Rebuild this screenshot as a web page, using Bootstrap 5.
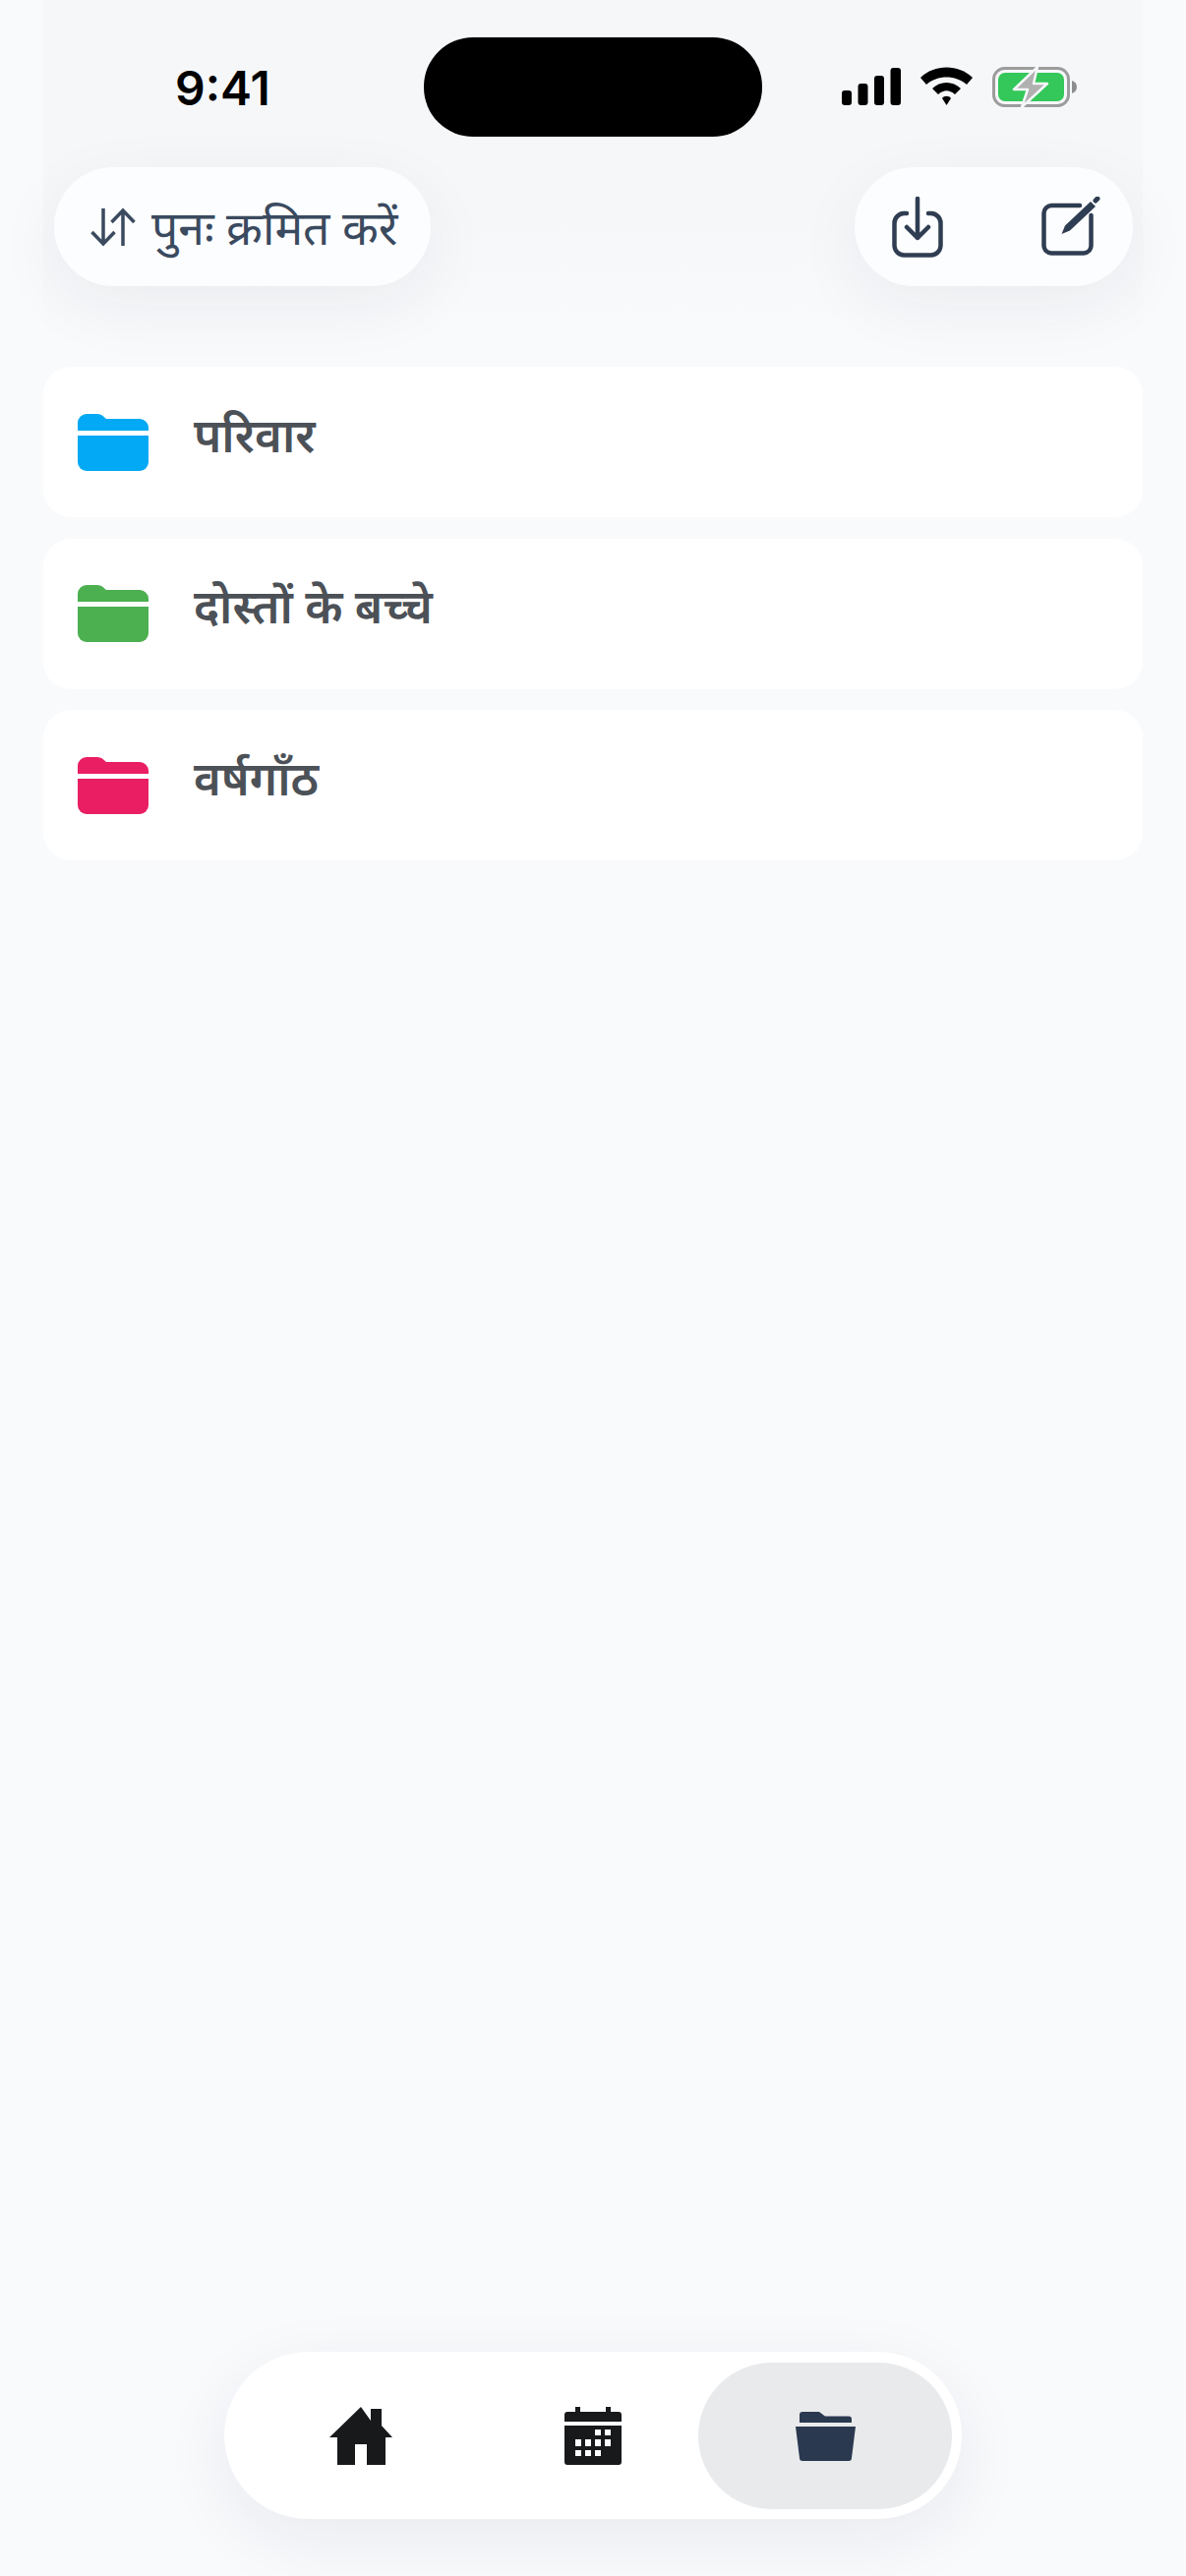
<!DOCTYPE html>
<html lang="hi">
<head>
    <meta charset="UTF-8">
    <meta name="viewport" content="width=device-width, initial-scale=1.0">
    <title>फ़ोल्डर</title>
    <link href="https://cdn.jsdelivr.net/npm/bootstrap@5.3.3/dist/css/bootstrap.min.css" rel="stylesheet">
    <script src="https://cdn.jsdelivr.net/npm/bootstrap@5.3.3/dist/js/bootstrap.bundle.min.js"></script>
    <style>
        html, body {
            height: 100%;
        }
        body {
            background: #f9fafc;
            font-family: "Noto Sans", "Inter", "Liberation Sans", sans-serif;
        }
        .app-shell {
            height: 2620px;
            padding: 0 44px 58px;
        }
        .top-area {
            height: 350px;
            margin-bottom: 23px;
            background: linear-gradient(to bottom, #f6f7f9 0, #f6f7f9 62%, #f9fafc 100%);
        }
        .status-row {
            height: 170px;
        }
        .status-time {
            width: 387px;
            padding: 71px 0 0 134px;
            font-family: "Inter", sans-serif;
            font-size: 48px;
            font-weight: 600;
            line-height: 38px;
            color: #000;
        }
        .island {
            width: 344px;
            height: 101px;
            margin-top: 38px;
            background: #000;
            border-radius: 50px;
        }
        .status-icons {
            gap: 20px;
            margin: 68px 0 0 81px;
        }
        .top-pills {
            padding: 0 10px 0 11px;
        }
        .float-pill {
            height: 121px;
            background: #fcfdfe;
            box-shadow: 0 20px 70px rgba(20, 30, 50, .06);
        }
        .sort-pill {
            width: 383px;
            padding: 0 0 0 37px;
            gap: 16px;
            font-size: 48px;
            color: #3a4a5f;
            border: 0;
            white-space: nowrap;
        }
        .sort-pill:hover {
            background: #fcfdfe;
            color: #3a4a5f;
        }
        .action-pill {
            width: 283px;
            position: relative;
        }
        .action-pill svg {
            position: absolute;
        }
        .folder-list {
            gap: 21.5px;
        }
        .folder-list .folder-row {
            height: 153px;
            padding: 0 35px;
            gap: 46px;
            background: #fff;
            border: 0;
            border-radius: 28px;
        }
        .folder-name {
            font-size: 47.5px;
            font-weight: 600;
            color: #4c5157;
            margin-top: -16px;
        }
        .bottom-nav {
            width: 750px;
            height: 170px;
            padding: 11px 10px 10px 0;
            background: #fff;
            border-radius: 85px;
            box-shadow: 0 20px 70px rgba(20, 30, 50, .07);
        }
        .nav-cell {
            height: 149px;
            width: 236px;
        }
        .nav-cell-active {
            width: 258px;
            margin-left: -11px;
            background: #e9eaec;
            border-radius: 75px;
        }
    </style>
</head>
<body>
    <div class="app-shell d-flex flex-column">
        <div class="top-area">
            <div class="status-row d-flex">
                <div class="status-time">9:41</div>
                <div class="island"></div>
                <div class="status-icons d-flex align-items-start">
                    <svg width="60" height="39" viewBox="0 0 60 39" fill="#000">
                        <rect x="0" y="24" width="10" height="15" rx="3"/>
                        <rect x="16.500" y="17" width="10" height="22" rx="3"/>
                        <rect x="33" y="9" width="10" height="30" rx="3"/>
                        <rect x="49.500" y="1" width="10.500" height="38" rx="3"/>
                    </svg>
                    <svg width="53" height="39" viewBox="0 0 53 39" fill="#000">
                        <path d="M0 11C14-3 39-3 53 11L47 18C36 8 17 8 6 18Z"/>
                        <path d="M12 22C20 14 33 14 41 22L35 28C29 23 24 23 18 28Z"/>
                        <path d="M22 32C24 29 29 29 31 32L26.500 39Z"/>
                    </svg>
                    <svg width="86" height="41" viewBox="0 0 86 41">
                        <rect x="1.500" y="1.500" width="76" height="38" rx="11" fill="none" stroke="#9c9c9c" stroke-width="3"/>
                        <rect x="6" y="6" width="67" height="29" rx="7" fill="#34c759"/>
                        <path d="M81 14c3 1 5 3 5 6.500s-2 5.500-5 6.500Z" fill="#8e8e8e"/>
                        <path d="M46 0L22 23H36L30 41L56 17H42Z" fill="#b0b0b0" stroke="#f6f7f9" stroke-width="2.500" stroke-linejoin="round"/>
                    </svg>
                </div>
            </div>
            <div class="top-pills d-flex justify-content-between">
                <button type="button" class="btn sort-pill float-pill rounded-pill d-flex align-items-center">
                    <svg width="46" height="40" viewBox="0 0 46 40" fill="none" stroke="#3a4a5f" stroke-width="3.500">
                        <path d="M13 1V37M1.500 25L13 37L24.500 25"/>
                        <path d="M33 39V3M21.500 15L33 3L44.500 15"/>
                    </svg>
                    <span>पुनः क्रमित करें</span>
                </button>
                <div class="action-pill float-pill rounded-pill">
                    <svg style="left:38px;top:30px" width="52" height="62" viewBox="0 0 52 62" fill="none" stroke="#2f3d52" stroke-width="4.500" stroke-linecap="round" stroke-linejoin="round">
                        <path d="M15 17H12A10 10 0 0 0 2.500 27V50A10 10 0 0 0 12 59.500H40A10 10 0 0 0 49.500 50V27A10 10 0 0 0 40 17H37"/>
                        <path d="M26 2V42M15 31L26 42L37 31"/>
                    </svg>
                    <svg style="left:190px;top:30px" width="60" height="60" viewBox="0 0 60 60" fill="none" stroke="#2f3d52" stroke-width="4.500" stroke-linecap="round" stroke-linejoin="round">
                        <path d="M39 9H10A8 8 0 0 0 2.500 17V50A8 8 0 0 0 10 57.500H43A8 8 0 0 0 50.500 50V19"/>
                        <path d="M20.500 38L24 29.500L50 5L55 10L29 34.500Z" fill="#2f3d52" stroke="none"/>
                        <path d="M55 4L57 2" stroke-width="5"/>
                    </svg>
                </div>
            </div>
        </div>

        <ul class="folder-list list-group d-flex flex-column">
            <li class="folder-row list-group-item d-flex align-items-center">
                <svg width="72" height="58" viewBox="0 0 72 58" fill="#03a9f4">
                    <path d="M0 17V9A9 9 0 0 1 9 0H20Q23 0 25 1.500L29 5H63A9 9 0 0 1 72 14V17Z"/>
                    <path d="M0 22H72V49A9 9 0 0 1 63 58H9A9 9 0 0 1 0 49Z"/>
                </svg>
                <span class="folder-name">परिवार</span>
            </li>
            <li class="folder-row list-group-item d-flex align-items-center">
                <svg width="72" height="58" viewBox="0 0 72 58" fill="#4caf50">
                    <path d="M0 17V9A9 9 0 0 1 9 0H20Q23 0 25 1.500L29 5H63A9 9 0 0 1 72 14V17Z"/>
                    <path d="M0 22H72V49A9 9 0 0 1 63 58H9A9 9 0 0 1 0 49Z"/>
                </svg>
                <span class="folder-name">दोस्तों के बच्चे</span>
            </li>
            <li class="folder-row list-group-item d-flex align-items-center">
                <svg width="72" height="58" viewBox="0 0 72 58" fill="#e91e63">
                    <path d="M0 17V9A9 9 0 0 1 9 0H20Q23 0 25 1.500L29 5H63A9 9 0 0 1 72 14V17Z"/>
                    <path d="M0 22H72V49A9 9 0 0 1 63 58H9A9 9 0 0 1 0 49Z"/>
                </svg>
                <span class="folder-name">वर्षगाँठ</span>
            </li>
        </ul>

        <nav class="bottom-nav d-flex align-items-center justify-content-end mx-auto mt-auto">
            <div class="nav-cell d-flex align-items-center justify-content-center">
                <svg width="64" height="59" viewBox="0 0 64 59" fill="#18191b">
                    <path d="M32 0L42 14V2H53V19L64 31H57V59H38V38H26V59H8V31H0Z"/>
                </svg>
            </div>
            <div class="nav-cell d-flex align-items-center justify-content-center">
                <svg width="58" height="59" viewBox="0 0 58 59" fill="#18191b">
                    <path d="M11 0H16V5H42V0H47V5H55A3 3 0 0 1 58 8V15H0V8A3 3 0 0 1 3 5H11Z"/>
                    <path fill-rule="evenodd" d="M0 19H58V56A3 3 0 0 1 55 59H3A3 3 0 0 1 0 56ZM31 23V29H37V23ZM41 23V29H47V23ZM11 33V40H17V33ZM21 33V40H27V33ZM31 33V40H37V33ZM41 33V40H47V33ZM11 44V50H17V44ZM21 44V50H27V44ZM31 44V50H37V44Z"/>
                </svg>
            </div>
            <div class="nav-cell nav-cell-active d-flex align-items-center justify-content-center">
                <svg width="61" height="50" viewBox="0 0 61 50" fill="#2a3950">
                    <path d="M4 11V3A3 3 0 0 1 7 0H24L30 4.500H54A3 3 0 0 1 57 7.500V11Z"/>
                    <path d="M0 15H61L57 47A3 3 0 0 1 54 50H7A3 3 0 0 1 4 47Z"/>
                </svg>
            </div>
        </nav>
    </div>
</body>
</html>
